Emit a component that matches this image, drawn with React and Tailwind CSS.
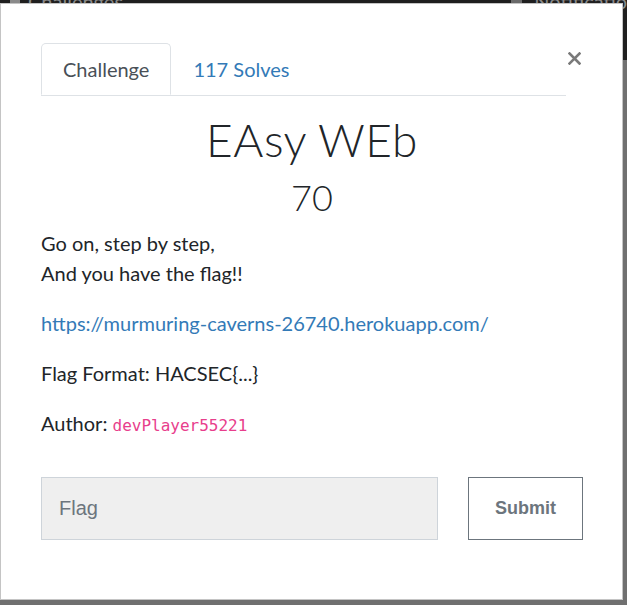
import React from "react";

const lato = { fontFamily: "Lato, 'Noto Sans', sans-serif" };

const App = () => {
  return (
    <div className="relative w-[627px] h-[605px] overflow-hidden bg-[#707070]">
      {/* dimmed navbar behind the modal */}
      <div className="h-[60px] bg-[#1f1f1f] flex items-start text-[#8a8a8a] text-[20px]" style={lato}>
        <div className="flex items-center gap-2 ml-[10px] -mt-[14px]">
          <span className="w-[10px] h-[14px] bg-[#8a8a8a] inline-block" />
          <span>Challenges</span>
        </div>
        <div className="flex items-center gap-3 ml-auto -mt-[14px] -mr-[20px]">
          <span className="w-[11px] h-[14px] bg-[#6a6a6a] inline-block" />
          <span>Notifications</span>
        </div>
      </div>

      {/* modal */}
      <div className="absolute left-0 top-[3px] w-[623px] h-[597px] bg-white border border-[#c4c4c4] pt-[39px] pl-[40px] pr-[39px]" style={lato}>
        {/* header: tabs + close */}
        <div className="flex items-start">
          <div className="flex-1 flex border-b border-[#dee2e6]">
            <div className="h-[52px] px-[21px] border border-[#dee2e6] border-b-white -mb-px rounded-t-[5px] bg-white flex items-center text-[20px] text-[#495057]">
              Challenge
            </div>
            <div className="h-[52px] px-[22px] flex items-center text-[20px] text-[#337ab7]">
              117 Solves
            </div>
          </div>
          <div className="w-[17px] flex justify-center mt-[9px]">
            <svg width="13" height="13" viewBox="0 0 13 13">
              <path d="M1.5 1.5 L11.5 11.5 M11.5 1.5 L1.5 11.5" stroke="#7a7a7a" strokeWidth="2.6" strokeLinecap="square" />
            </svg>
          </div>
        </div>

        {/* title */}
        <div className="mt-[16px] text-center text-[#212529]">
          <div className="text-[46px] leading-[56px] font-light tracking-[0.5px]">EAsy WEb</div>
          <div className="mt-[7px] text-[36px] leading-[44px] font-light">70</div>
        </div>

        {/* description */}
        <div className="mt-[9px] text-[20px] leading-[30px] text-[#212529]">
          <p>
            Go on, step by step,
            <br />
            And you have the flag!!
          </p>
          <p className="mt-[20px] text-[#337ab7]">https://murmuring-caverns-26740.herokuapp.com/</p>
          <p className="mt-[20px]">Flag Format: HACSEC{"{...}"}</p>
          <p className="mt-[20px]">
            Author:{" "}
            <code className="text-[16px] text-[#e83e8c]" style={{ fontFamily: "'DejaVu Sans Mono', monospace" }}>
              devPlayer55221
            </code>
          </p>
        </div>

        {/* submit row */}
        <div className="mt-[36px] flex items-center gap-[30px]" style={{ fontFamily: "'Liberation Sans', Arial, sans-serif" }}>
          <input
            placeholder="Flag"
            className="w-[397px] h-[63px] bg-[#efefef] border border-[#ced4da] pl-[17px] text-[20px] text-[#495057] placeholder:text-[#6c757d] outline-none"
          />
          <button className="w-[115px] h-[63px] border border-[#6c757d] bg-white text-[18px] font-bold text-[#6c757d]">
            Submit
          </button>
        </div>
      </div>
    </div>
  );
};

export default App;
